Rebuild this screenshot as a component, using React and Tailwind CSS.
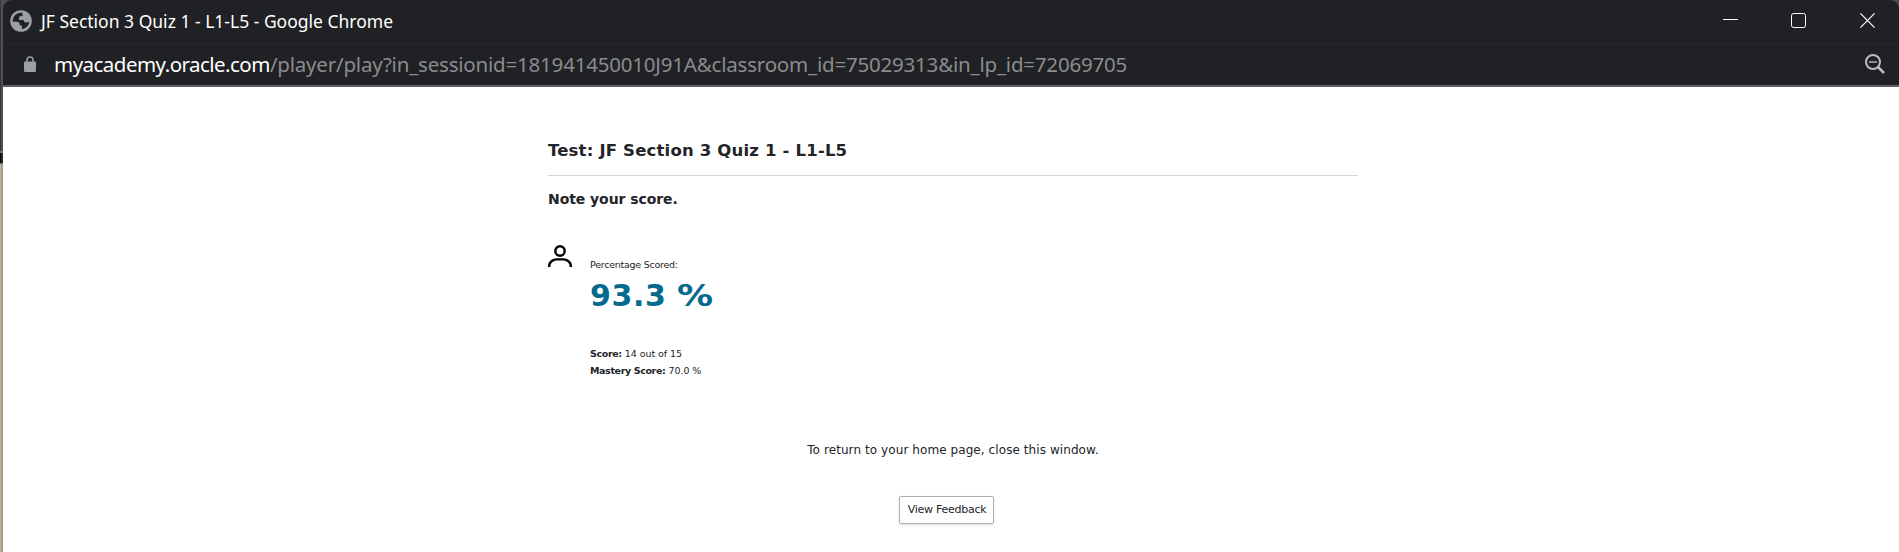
import React from "react";

function GlobeIcon() {
  return (
    <svg className="block size-[22px] shrink-0" viewBox="0 0 22 22">
      <circle cx="11" cy="11" r="10.8" fill="#9aa0a6" />
      <path d="M12.4 2.8C8.5 2.2 4.6 4.4 3.2 8.2c-.5 1.300-.5 2.300-.4 3.500h3.900c1.900 0 3 1 3 2.500v1.200h2.200v3.700c4-.4 7.200-3.800 7.300-7.900-.8.900-1.700 1.400-2.900 1.400-1.700 0-2.600-.9-2.600-2.600H9V8.200c0-1.300.9-2.200 2.200-2.200h1.200z" fill="#202124" />
    </svg>
  );
}

function LockIcon() {
  return (
    <svg className="block h-4 w-3 shrink-0" viewBox="0 0 12 16">
      <rect x="0" y="5.500" width="12" height="10.500" rx="1.300" fill="#9aa0a6" />
      <path d="M3 6.500V4a3 3 0 0 1 6 0v2.500" fill="none" stroke="#9aa0a6" strokeWidth="1.500" />
    </svg>
  );
}

function WindowControls() {
  return (
    <div className="mr-6 flex items-center text-white">
      <svg className="mr-[53px] block size-[15px]" viewBox="0 0 15 15">
        <path d="M0 6.500h15" stroke="currentColor" />
      </svg>
      <svg className="mr-[54px] block size-[15px]" viewBox="0 0 15 15">
        <rect x=".5" y=".5" width="14" height="14" rx="2" fill="none" stroke="currentColor" />
      </svg>
      <svg className="block size-[15px]" viewBox="0 0 15 15">
        <path d="M.4.4l14.200 14.200M14.600.4L.4 14.600" stroke="currentColor" strokeWidth="1.200" />
      </svg>
    </div>
  );
}

function ZoomOutIcon() {
  return (
    <svg className="mr-[14px] block size-5" viewBox="0 0 20 20" fill="none" stroke="#bdbdbd">
      <circle cx="8" cy="8" r="7" strokeWidth="2" />
      <path d="M4 8h8" stroke="#8d8d8d" strokeWidth="2" />
      <path d="M13 13l6 6" strokeWidth="2.500" />
    </svg>
  );
}

function PersonIcon() {
  return (
    <svg className="mt-5 block h-[22px] w-6 shrink-0" viewBox="0 0 24 22" fill="none" stroke="#000" strokeWidth="2.400">
      <circle cx="12" cy="6" r="4.700" />
      <path d="M1.200 22v-1.200c0-3.600 3.700-6.400 7.300-6.400h7c3.600 0 7.300 2.800 7.300 6.400V22" />
    </svg>
  );
}

export default function App() {
  return (
    <div className="flex h-[552px] w-full overflow-hidden bg-[#4a4a4d]">
      <div className="flex w-[3px] shrink-0 flex-col">
        <div className="h-[151px] border-l border-[#36363a] bg-[#505054]" />
        <div className="h-[2px] bg-[#77777a]" />
        <div className="h-[10px] border-l border-[#08080a] bg-[#29292b]" />
        <div className="h-[1px] bg-[#77736a]" />
        <div className="flex-1 border-l border-[#c4b897] bg-[#a39c8c]" />
      </div>
      <div className="flex min-w-0 flex-1 flex-col">
        <header className="h-[87px] shrink-0 rounded-t-[9px] border-b-2 border-[#5f5e63] bg-[#202124]">
          <div className="flex h-11 items-center justify-between border-b border-[#28292c] pb-[2px] pl-[7px]">
            <div className="flex items-center">
              <GlobeIcon />
              <h1 className="ml-[9px] pt-px whitespace-nowrap font-['Noto_Sans',sans-serif] text-[17.500px] leading-6 text-white">JF Section 3 Quiz 1 - L1-L5 - Google Chrome</h1>
            </div>
            <WindowControls />
          </div>
          <div className="flex h-[40px] items-center justify-between pl-[21px]">
            <div className="flex items-center">
              <LockIcon />
              <div className="ml-[18px] flex whitespace-nowrap font-['Noto_Sans',sans-serif] text-[20.500px] leading-7">
                <span className="tracking-[-0.53px] text-white">myacademy.oracle.com</span>
                <span className="tracking-[-0.2px] text-[#8b8c8e]">/player/play?in_sessionid=181941450010J91A&amp;classroom_id=75029313&amp;in_lp_id=72069705</span>
              </div>
            </div>
            <ZoomOutIcon />
          </div>
        </header>
        <main className="flex-1 bg-white pl-[545px] font-['DejaVu_Sans',sans-serif] text-[#222427]">
          <div className="w-[810px]">
            <h2 className="border-b border-[#d4d4d4] pt-[52px] pb-[12px] text-[16.500px] leading-6 font-bold tracking-[0.18px]">
              <span>Test: JF Section 3 Quiz 1 - L1-L5</span>
            </h2>
            <p className="pt-[13px] text-[14px] leading-5 font-bold tracking-[-0.07px]"><span>Note your score.</span></p>
            <div className="mt-4 flex">
              <PersonIcon />
              <div className="ml-[18px] pt-[30px]">
                <p className="text-[9.500px] leading-5 tracking-[-0.25px]"><span>Percentage Scored:</span></p>
                <p className="pt-px text-[30px] leading-10 font-bold whitespace-nowrap text-[#046a8e]">
                  <span className="tracking-[0.6px]">93.3 </span>
                  <span className="inline-block origin-left scale-x-120">%</span>
                </p>
                <div className="pt-[29px] text-[9.500px] leading-[17px] tracking-[-0.05px]">
                  <p><b className="tracking-[-0.37px]">Score:</b> <span>14 out of 15</span></p>
                  <p><b className="tracking-[-0.37px]">Mastery Score:</b> <span>70.0 %</span></p>
                </div>
              </div>
            </div>
            <p className="mt-[61px] text-center text-[12px] leading-5 tracking-[0.08px]"><span>To return to your home page, close this window.</span></p>
            <div className="mt-9 flex justify-center pr-[13px]">
              <button className="h-7 w-[95px] rounded-[2px] border border-[#adadad] pl-px text-[11px] leading-6 tracking-[-0.25px] whitespace-nowrap shadow-sm">View Feedback</button>
            </div>
          </div>
        </main>
      </div>
    </div>
  );
}
